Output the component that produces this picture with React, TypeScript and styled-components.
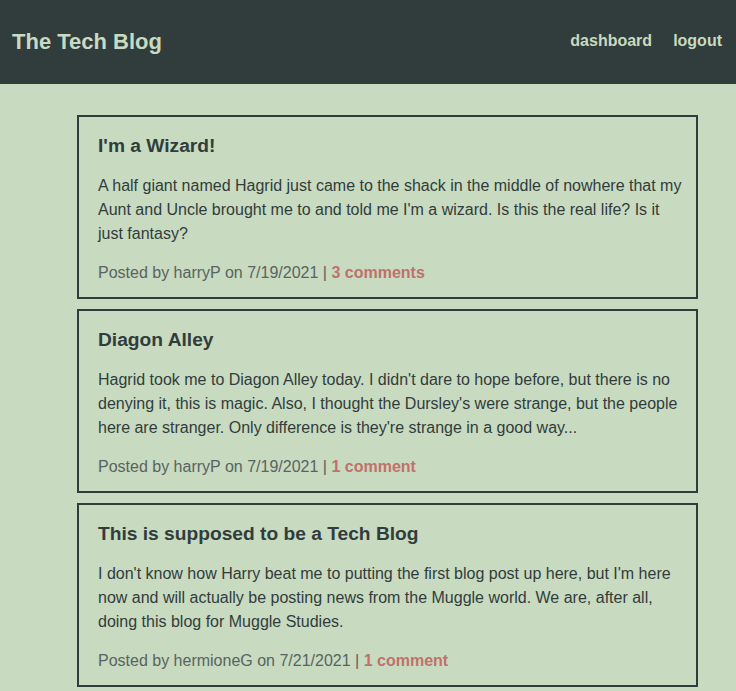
import * as React from 'react';
import styled, { createGlobalStyle } from 'styled-components';

const GlobalStyle = createGlobalStyle`
  html, body {
    margin: 0;
    padding: 0;
    background: #c8dac0;
    font-family: 'Liberation Sans', Arial, Helvetica, sans-serif;
    color: #313d3c;
  }
`;

interface Post {
  id: number;
  title: string;
  body: string;
  author: string;
  date: string;
  comments: number;
}

const posts: Post[] = [
  {
    id: 1,
    title: "I'm a Wizard!",
    body: "A half giant named Hagrid just came to the shack in the middle of nowhere that my Aunt and Uncle brought me to and told me I'm a wizard. Is this the real life? Is it just fantasy?",
    author: 'harryP',
    date: '7/19/2021',
    comments: 3,
  },
  {
    id: 2,
    title: 'Diagon Alley',
    body: "Hagrid took me to Diagon Alley today. I didn't dare to hope before, but there is no denying it, this is magic. Also, I thought the Dursley's were strange, but the people here are stranger. Only difference is they're strange in a good way...",
    author: 'harryP',
    date: '7/19/2021',
    comments: 1,
  },
  {
    id: 3,
    title: 'This is supposed to be a Tech Blog',
    body: "I don't know how Harry beat me to putting the first blog post up here, but I'm here now and will actually be posting news from the Muggle world. We are, after all, doing this blog for Muggle Studies.",
    author: 'hermioneG',
    date: '7/21/2021',
    comments: 1,
  },
];

const Header = styled.header`
  height: 84px;
  background: #313c3c;
  display: flex;
  align-items: center;
  justify-content: space-between;
  padding: 0 14px 0 12px;
  box-sizing: border-box;
`;

const Brand = styled.a`
  font-size: 22px;
  font-weight: bold;
  color: #c8dabf;
  text-decoration: none;
`;

const Nav = styled.nav`
  display: flex;
  gap: 21px;
  margin-top: -3px;
`;

const NavLink = styled.a`
  font-size: 16px;
  font-weight: bold;
  color: #c8dabf;
  text-decoration: none;
`;

const Main = styled.main`
  padding: 31px 38px 20px 77px;
  display: flex;
  flex-direction: column;
  gap: 10px;
`;

const Card = styled.article`
  border: 2px solid #313c3c;
  padding: 17px 8px 12px 19px;
`;

const Title = styled.h2`
  margin: 0 0 16px;
  font-size: 19.2px;
  font-weight: bold;
  line-height: 24px;
`;

const Body = styled.p`
  margin: 0 0 15px;
  font-size: 16px;
  line-height: 24px;
`;

const Meta = styled.p`
  margin: 0;
  font-size: 16px;
  line-height: 24px;
  color: #58645f;
`;

const CommentLink = styled.a`
  color: #c0716b;
  font-weight: bold;
  text-decoration: none;
`;

export default function App() {
  return (
    <>
      <GlobalStyle />
      <Header>
        <Brand href="#">The Tech Blog</Brand>
        <Nav>
          <NavLink href="#">dashboard</NavLink>
          <NavLink href="#">logout</NavLink>
        </Nav>
      </Header>
      <Main>
        {posts.map((p) => (
          <Card key={p.id}>
            <Title>{p.title}</Title>
            <Body>{p.body}</Body>
            <Meta>
              Posted by {p.author} on {p.date} |{' '}
              <CommentLink href="#">
                {p.comments} {p.comments === 1 ? 'comment' : 'comments'}
              </CommentLink>
            </Meta>
          </Card>
        ))}
      </Main>
    </>
  );
}
